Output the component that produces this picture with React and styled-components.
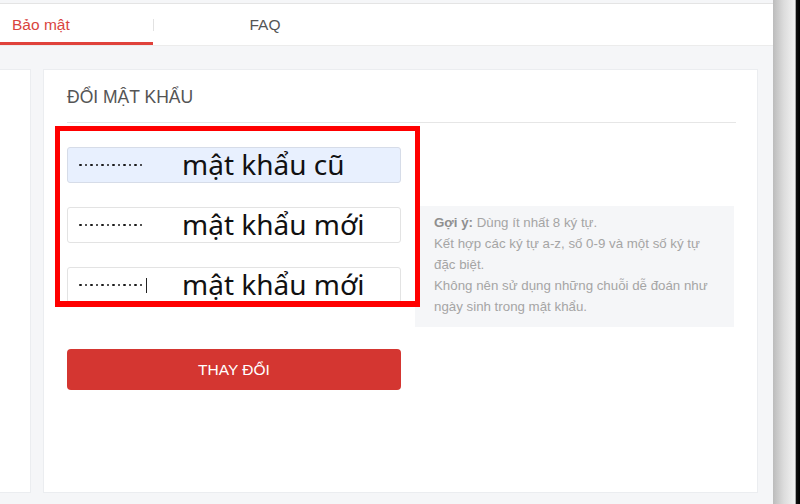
import React from 'react'
import styled, { createGlobalStyle } from 'styled-components'

const Global = createGlobalStyle`
  html, body { margin: 0; padding: 0; background: #fff; }
  body { font-family: "Liberation Sans", Arial, sans-serif; }
`

const Page = styled.div`
  display: flex;
  width: 800px;
  height: 504px;
  overflow: hidden;
`

const Main = styled.div`
  width: 773px;
  display: flex;
  flex-direction: column;
  padding-top: 3px;
  background: #f5f6f8;
`

const Edge = styled.div`
  width: 27px;
  background: linear-gradient(90deg, #bcbcbc 0%, #dcdcdc 40%, #f3f3f3 82%, #111 86%, #000 100%);
`

const TabBar = styled.div`
  display: flex;
  align-items: stretch;
  height: 41px;
  background: #fff;
  border-top: 1px solid #e4e4e4;
  border-bottom: 1px solid #ececec;
`

const Tab = styled.div`
  width: ${p => p.w}px;
  display: flex;
  align-items: center;
  justify-content: ${p => (p.center ? 'center' : 'flex-start')};
  padding-left: ${p => (p.center ? 0 : 12)}px;
  box-sizing: border-box;
  font-size: 15.5px;
  color: ${p => (p.active ? '#d9443e' : '#555')};
  border-bottom: 3px solid ${p => (p.active ? '#e0423b' : 'transparent')};
  padding-top: 4px;
`

const TabSep = styled.div`
  width: 1px;
  height: 12px;
  background: #e2e2e2;
  align-self: center;
`

const Body = styled.div`
  flex: 1;
  display: flex;
  gap: 12px;
  padding: 23px 15px 11px 0;
`

const SidePanel = styled.div`
  width: 30px;
  background: #fff;
  border: 1px solid #ebedf0;
  border-left: none;
`

const Card = styled.div`
  flex: 1;
  background: #fff;
  border: 1px solid #ebedf0;
  padding: 0 21px 0 23px;
`

const Title = styled.div`
  height: 53px;
  display: flex;
  align-items: center;
  font-size: 17.5px;
  color: #555;
  border-bottom: 1px solid #e6e6e6;
  padding-top: 2px;
  box-sizing: border-box;
`

const FormRow = styled.div`
  position: relative;
  display: flex;
  gap: 14px;
  padding-top: 24px;
`

const Fields = styled.div`
  width: 334px;
  display: flex;
  flex-direction: column;
`

const Inputs = styled.div`
  display: flex;
  flex-direction: column;
  gap: 24px;
`

const Field = styled.div`
  height: 36px;
  box-sizing: border-box;
  display: flex;
  align-items: center;
  padding-left: 11px;
  border: 1px solid ${p => (p.filled ? '#d6dce8' : '#e3e3e3')};
  border-radius: 3px;
  background: ${p => (p.filled ? '#e8f0fe' : '#fff')};
`

const Dots = styled.span`
  width: 103px;
  display: flex;
  align-items: center;
  gap: 3px;
  span {
    width: 2.5px;
    height: 2.5px;
    border-radius: 50%;
    background: #1a1a1a;
  }
`

const Caret = styled.i`
  width: 1px;
  height: 15px;
  background: #222;
  margin-left: 1px;
`

const Label = styled.span`
  font-family: "Noto Sans", "Open Sans", sans-serif;
  font-size: 28px;
  color: #111;
  line-height: 1;
  margin-bottom: 2px;
`

const Highlight = styled.div`
  position: absolute;
  left: -12px;
  top: 3px;
  width: 365px;
  height: 181px;
  box-sizing: border-box;
  border: 5px solid #ff0000;
  border-bottom-width: 6px;
  pointer-events: none;
`

const Cover = styled.div`
  position: absolute;
  left: -7px;
  top: 178px;
  width: 355px;
  height: 4px;
  background: #fff;
`

const Button = styled.button`
  margin-top: 46px;
  height: 41px;
  border: none;
  border-radius: 4px;
  background: #d43631;
  color: #fff;
  font-family: "Liberation Sans", Arial, sans-serif;
  font-size: 15.5px;
`

const Hint = styled.div`
  margin-top: 59px;
  width: 319px;
  height: 121px;
  box-sizing: border-box;
  background: #f5f6f8;
  padding: 6px 10px 0 19px;
  font-size: 13.3px;
  line-height: 21px;
  color: #a5a5a5;
  b { color: #8f8f8f; font-weight: bold; }
`

const DotRow = ({ caret }) => (
  <Dots>
    {Array.from({ length: 12 }).map((_, i) => <span key={i} />)}
    {caret && <Caret />}
  </Dots>
)

export default function App() {
  return (
    <Page>
      <Global />
      <Main>
        <TabBar>
          <Tab w={153} active>Bảo mật</Tab>
          <TabSep />
          <Tab w={222} center>FAQ</Tab>
        </TabBar>
        <Body>
          <SidePanel />
          <Card>
            <Title>ĐỔI MẬT KHẨU</Title>
            <FormRow>
              <Fields>
                <Inputs>
                  <Field filled><DotRow /><Label>mật khẩu cũ</Label></Field>
                  <Field><DotRow /><Label>mật khẩu mới</Label></Field>
                  <Field><DotRow caret /><Label>mật khẩu mới</Label></Field>
                </Inputs>
                <Button>THAY ĐỔI</Button>
              </Fields>
              <Hint>
                <b>Gợi ý:</b> Dùng ít nhất 8 ký tự.<br />
                Kết hợp các ký tự a-z, số 0-9 và một số ký tự đặc biệt.<br />
                Không nên sử dụng những chuỗi dễ đoán như ngày sinh trong mật khẩu.
              </Hint>
              <Cover />
              <Highlight />
            </FormRow>
          </Card>
        </Body>
      </Main>
      <Edge />
    </Page>
  )
}
